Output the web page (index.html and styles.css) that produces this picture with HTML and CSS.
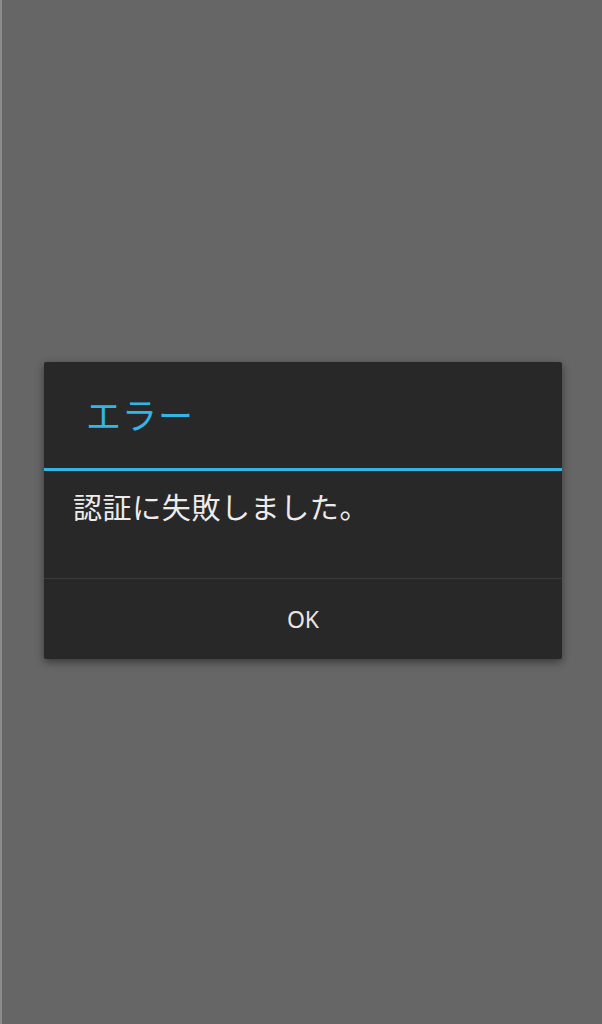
FILE: index.html
```html
<!DOCTYPE html>
<html lang="ja">
<head>
  <meta charset="UTF-8" />
  <meta name="viewport" content="width=device-width, initial-scale=1" />
  <title>エラー</title>
  <link rel="stylesheet" href="styles.css">
</head>
<body>

  <div class="dialog" role="alertdialog" aria-labelledby="dlgTitle">
    <div class="dialog-title" id="dlgTitle">エラー</div>
    <div class="dialog-msg">認証に失敗しました。</div>
    <button class="dialog-btn">OK</button>
  </div>

</body>
</html>
```

FILE: styles.css
```css
* {
  box-sizing: border-box;
}
body {
  margin: 0;
  min-height: 1024px;
  background: #666666;
  border-left: 2px solid #8c8c8c;
  font-family: "Noto Sans CJK JP", "Noto Sans", sans-serif;
  display: flex;
  align-items: flex-start;
  padding: 362px 0 0 42px;
}
.dialog {
  width: 518px;
  background: #282828;
  border-radius: 2px;
  box-shadow: 0 3px 8px rgba(0, 0, 0, 0.45);
  display: flex;
  flex-direction: column;
}
.dialog-title {
  height: 109px;
  padding: 0 0 3px 42px;
  display: flex;
  align-items: center;
  color: #33b5e5;
  font-size: 35px;
  letter-spacing: 1px;
  border-bottom: 3px solid #33b5e5;
}
.dialog-msg {
  height: 108px;
  padding: 16px 0 0 29px;
  color: #ececec;
  font-size: 29px;
  letter-spacing: 0.6px;
  line-height: 38px;
  border-bottom: 1px solid #3c3c3c;
}
.dialog-btn {
  height: 80px;
  background: none;
  border: none;
  color: #e6e6e6;
  font-family: "Noto Sans", sans-serif;
  font-size: 23px;
  cursor: pointer;
}
```
